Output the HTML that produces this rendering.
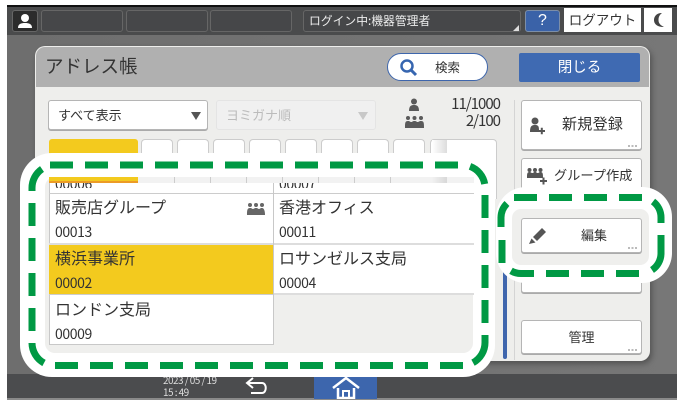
<!DOCTYPE html>
<html lang="ja"><head><meta charset="utf-8">
<style>
html,body{margin:0;padding:0;background:#fff}
#s{position:relative;width:684px;height:404px;overflow:hidden;background:#fff;font-family:"Liberation Sans","Noto Sans CJK JP",sans-serif;color:#333}
#s div{position:absolute;box-sizing:border-box;white-space:nowrap}
.j{font-family:"Noto Sans CJK JP",sans-serif}
.b{background:#fff;border:1px solid #b5b5b5;border-radius:3px;box-shadow:0 1px 0 #aaa}
.t{background:#fff;border:1px solid #ccc;border-bottom:0;border-radius:4px 4px 0 0;top:139px;height:20px}
.top{top:10px;height:22px;border:1px solid #666;border-radius:3px;background:#464749}
.n{font-size:16px;line-height:20px;color:#333;font-family:"Noto Sans CJK JP",sans-serif}
.c{font-size:14px;line-height:18px;color:#333;font-family:"Noto Sans CJK JP",sans-serif;letter-spacing:-.4px}
.d{position:absolute}
</style></head><body>
<div id="s">
<div style="left:7px;top:5px;width:670px;height:394px;background:linear-gradient(90deg,#6e6e6e,#777)"></div>
<div style="left:7px;top:5px;width:670px;height:2px;background:#111"></div>
<div style="left:7px;top:7px;width:670px;height:28px;background:#4a4b4c"></div>
<div class="top" style="left:12px;width:26px;background:#2c2c2c"></div>
<svg style="position:absolute;left:12px;top:10px" width="26" height="22"><circle cx="13" cy="8" r="4" fill="#fff"/><path d="M6 18c0-4 3-5 7-5s7 1 7 5z" fill="#fff"/></svg>
<div class="top" style="left:41px;width:82px"></div>
<div class="top" style="left:126px;width:82px"></div>
<div class="top" style="left:210px;width:82px"></div>
<div class="top j" style="left:303px;width:218px;color:#eee;font-size:11.800px;line-height:20px;padding-left:5px">ログイン中:機器管理者</div>
<svg style="position:absolute;left:512px;top:24px" width="8" height="8"><path d="M1 7L7 1V7z" fill="#ddd"/></svg>
<div style="left:525px;top:10px;width:35px;height:22px;background:#3a62a8;border:1px solid #7c8ea8;border-radius:3px;color:#fff;font-size:16px;line-height:20px;text-align:center">?</div>
<div class="j" style="left:564px;top:8px;width:77px;height:24px;background:#fff;color:#333;font-size:13.500px;line-height:23px;text-align:center">ログアウト</div>
<div style="left:644px;top:8px;width:28px;height:24px;background:#fff"></div>
<svg style="position:absolute;left:644px;top:8px" width="28" height="24"><path d="M18 5C12 5 10 9 10 12C10 15 12 19 20 19C16 17 14.500 15 14.500 12C14.500 9 15.500 7 18 5z" fill="#444"/></svg>

<div style="left:35px;top:46px;width:615px;height:315px;background:#eeeeec;border-radius:10px;box-shadow:2px 3px 6px rgba(0,0,0,.3)"></div>
<div style="left:36px;top:47px;width:613px;height:40px;background:#b0b0b0;border-radius:9px 9px 0 0"></div>
<div class="j" style="left:45px;top:53px;font-size:18.500px;line-height:26px;color:#333">アドレス帳</div>
<div style="left:387px;top:53px;width:101px;height:28px;background:#fff;border:1.500px solid #3e66ac;border-radius:14px"></div>
<svg style="position:absolute;left:397px;top:57px" width="24" height="22"><circle cx="10" cy="9" r="5.500" fill="none" stroke="#3766b0" stroke-width="2.500"/><path d="M14 13l5 5" stroke="#3766b0" stroke-width="3"/></svg>
<div class="j" style="left:435px;top:58px;font-size:12.500px;line-height:17px;color:#333">検索</div>
<div class="j" style="left:519px;top:53px;width:121px;height:29px;background:#3f6ab2;border-radius:2px;color:#fff;font-size:14.500px;line-height:27px;text-align:center">閉じる</div>

<div class="b j" style="left:48px;top:100px;width:160px;height:30px;font-size:13px;line-height:28px;padding-left:9px;color:#333">すべて表示</div>
<svg style="position:absolute;left:190px;top:111px" width="12" height="10"><path d="M1 1H11L6 9z" fill="#555"/></svg>
<div class="j" style="left:216px;top:100px;width:160px;height:30px;border:1px solid #e4e4e4;border-radius:3px;background:#f0f0f0;font-size:13px;line-height:28px;padding-left:9px;color:#bbb">ヨミガナ順</div>
<svg style="position:absolute;left:357px;top:111px" width="12" height="10"><path d="M1 1H11L6 9z" fill="#c8c8c8"/></svg>

<svg style="position:absolute;left:402px;top:97px" width="24" height="36" fill="#5a5a5a"><circle cx="12" cy="4.500" r="3"/><path d="M7 14c0-5 2-6 5-6s5 1 5 6z"/><circle cx="6" cy="21" r="2"/><circle cx="12.500" cy="21" r="2"/><circle cx="19" cy="21" r="2"/><path d="M3 31c0-5 0-7 3-7 2 0 2 1 3.200 1s1.300-1 3.300-1 2 1 3.200 1 1.300-1 3.300-1c3 0 3 2 3 7z"/></svg>
<div class="j" style="left:440px;top:95px;width:60px;text-align:right;font-size:15px;line-height:17px;letter-spacing:-1px;color:#333">11/1000<br>2/100</div>
<div style="left:514px;top:100px;width:1px;height:260px;background:#d4d4d4"></div>

<div style="left:49px;top:139px;width:89px;height:20px;background:#f3ca1e;border-radius:3px 3px 0 0"></div>
<div class="t" style="left:141px;width:32px"></div>
<div class="t" style="left:177px;width:32px"></div>
<div class="t" style="left:213px;width:32px"></div>
<div class="t" style="left:249px;width:32px"></div>
<div class="t" style="left:285px;width:32px"></div>
<div class="t" style="left:321px;width:32px"></div>
<div class="t" style="left:357px;width:32px"></div>
<div class="t" style="left:393px;width:32px"></div>
<div class="t" style="left:430px;width:67px;height:60px"></div>
<div style="left:432px;top:140px;width:15px;height:20px;background:linear-gradient(90deg,#fff,#ddd)"></div>

<div class="b" style="left:521px;top:100px;width:121px;height:50px"></div>
<svg style="position:absolute;left:528px;top:115px" width="20" height="20" fill="#555"><circle cx="7" cy="6" r="3.500"/><path d="M2 17c0-5 1-7 5-7s4 2 4 7z"/><path d="M10.500 15h6.500v2h-6.500zM12.800 12.700h2v6.500h-2z"/></svg>
<div class="j" style="left:562px;top:113px;font-size:15px;line-height:22px;letter-spacing:.3px">新規登録</div>
<svg class="d" style="left:628px;top:145px" width="10" height="2" fill="#bbb"><rect width="2" height="2"/><rect x="3.500" width="2" height="2"/><rect x="7" width="2" height="2"/></svg>
<div class="b" style="left:521px;top:158px;width:121px;height:40px"></div>
<svg style="position:absolute;left:525px;top:166px" width="24" height="20" fill="#555"><circle cx="4.500" cy="4" r="2"/><circle cx="10" cy="4" r="2"/><circle cx="15.500" cy="4" r="2"/><path d="M2 12c0-4 0-6 2.500-6 1.500 0 1.500 1 2.800 1s1.200-1 2.700-1 1.500 1 2.800 1 1.200-1 2.700-1c2.500 0 2.500 2 2.500 6z"/><path d="M15 14h7v2h-7zM17.500 11.500h2v7h-2z"/></svg>
<div class="j" style="left:554px;top:165px;font-size:13.200px;line-height:20px">グループ作成</div>

<div class="b" style="left:521px;top:255px;width:121px;height:38px"></div>
<div style="left:503px;top:270px;width:4px;height:89px;background:#3f66ad;border-radius:2px"></div>
<div class="b j" style="left:521px;top:320px;width:121px;height:34px;font-size:13px;line-height:32px;text-align:center;color:#333">管理</div>
<svg class="d" style="left:628px;top:349px" width="10" height="2" fill="#bbb"><rect width="2" height="2"/><rect x="3.500" width="2" height="2"/><rect x="7" width="2" height="2"/></svg>

<div style="left:7px;top:374px;width:670px;height:25px;background:#4b4c4e"></div>
<div style="left:7px;top:398px;width:670px;height:1.500px;background:#8a8a8a"></div>
<div style="left:314px;top:374px;width:63px;height:25px;background:#3d66ad"></div>
<div class="j" style="left:163px;top:374px;color:#ddd;font-size:10px;line-height:12px;letter-spacing:-.55px">2023 / 05 / 19<br>15 : 49</div>
<svg style="position:absolute;left:245px;top:377px" width="26" height="20" fill="none" stroke="#fff" stroke-width="2"><path d="M2 6H17c5 0 5 10 0 10H6"/><path d="M8 1L2 6l6 5"/></svg>
<svg style="position:absolute;left:332px;top:377px" width="28" height="22" fill="none" stroke="#fff"><path d="M1 11L14 1l13 10" stroke-width="2.500"/><path d="M6 11V21H22V11" stroke-width="2.500"/><path d="M11 21V14H17V21" stroke-width="2"/></svg>

<svg style="position:absolute;left:0;top:0" width="684" height="404">
<rect x="20" y="153" width="475" height="224" rx="32" fill="#fff"/>
<rect x="496" y="187" width="176" height="96" rx="30" fill="#fff"/>
<rect x="45" y="177" width="428" height="176" rx="10" fill="#efefed"/>
<rect x="512" y="209" width="137" height="56" rx="9" fill="#efefed"/>
</svg>

<div style="left:49px;top:177px;width:425px;height:6px;background:#f2f2f2"></div>
<div style="left:49px;top:177px;width:89px;height:6px;background:#f3ca1e;border-bottom:2px solid #ec9b26"></div>
<div style="left:174px;top:177px;width:1px;height:6px;background:#ccc"></div>
<div style="left:210px;top:177px;width:1px;height:6px;background:#ccc"></div>
<div style="left:246px;top:177px;width:1px;height:6px;background:#ccc"></div>
<div style="left:282px;top:177px;width:1px;height:6px;background:#ccc"></div>
<div style="left:318px;top:177px;width:1px;height:6px;background:#ccc"></div>
<div style="left:354px;top:177px;width:1px;height:6px;background:#ccc"></div>
<div style="left:390px;top:177px;width:1px;height:6px;background:#ccc"></div>
<div style="left:432px;top:177px;width:15px;height:6px;background:linear-gradient(90deg,#f2f2f2,#d8d8d8)"></div>

<div style="left:49px;top:183px;width:225px;height:162px;background:#fff;border:1px solid #c8c8c8;border-top:0"></div>
<div style="left:274px;top:183px;width:200px;height:112px;background:#fff;border-bottom:2px solid #ddd"></div>
<div style="left:49px;top:193px;width:425px;height:1px;background:#ccc"></div>
<div style="left:49px;top:243px;width:425px;height:2px;background:#ddd"></div>
<div style="left:49px;top:245px;width:225px;height:49px;background:#f3ca1e"></div>
<div style="left:49px;top:294px;width:225px;height:1px;background:#ccc"></div>
<div style="left:273px;top:183px;width:1px;height:162px;background:#c8c8c8"></div>

<div class="c" style="left:55px;top:183px;height:5px;overflow:hidden"><span style="display:block;margin-top:-8px">00006</span></div>
<div class="c" style="left:279px;top:183px;height:5px;overflow:hidden"><span style="display:block;margin-top:-8px">00007</span></div>
<div class="n" style="left:55px;top:196px">販売店グループ</div>
<div class="c" style="left:55px;top:223px">00013</div>
<svg style="position:absolute;left:246px;top:202px" width="20" height="14" fill="#666"><circle cx="4" cy="3" r="2"/><circle cx="10" cy="3" r="2"/><circle cx="16" cy="3" r="2"/><path d="M1 13c0-4 0-7 3-7 2 0 2 1 3 1s1-1 3-1 2 1 3 1 1-1 3-1 3 3 3 7z"/></svg>
<div class="n" style="left:279px;top:196px">香港オフィス</div>
<div class="c" style="left:279px;top:223px">00011</div>
<div class="n" style="left:55px;top:247px">横浜事業所</div>
<div class="c" style="left:55px;top:274px">00002</div>
<div class="n" style="left:279px;top:247px">ロサンゼルス支局</div>
<div class="c" style="left:279px;top:274px">00004</div>
<div class="n" style="left:55px;top:298px">ロンドン支局</div>
<div class="c" style="left:55px;top:325px">00009</div>

<div class="b j" style="left:521px;top:218px;width:121px;height:35px;font-size:13px;line-height:31px;padding-left:59px;color:#333">編集</div>
<svg style="position:absolute;left:527px;top:226px" width="20" height="20" fill="#555"><path d="M6 11L15 2l4 4L10 15z"/><path d="M4.500 12.500L8.500 16.500 2 18z"/></svg>
<svg class="d" style="left:628px;top:247px" width="10" height="2" fill="#bbb"><rect width="2" height="2"/><rect x="3.500" width="2" height="2"/><rect x="7" width="2" height="2"/></svg>

<svg style="position:absolute;left:0;top:0" width="684" height="404" fill="none" stroke="#009944" stroke-width="7">
<!-- address list outline -->
<path stroke-dasharray="23 12" d="M50 165H458"/>
<path d="M470 166.400A23 23 0 0 1 484.700 184"/>
<path stroke-dasharray="23 12" d="M485 195V323"/>
<path d="M485 335V342.500A23 23 0 0 1 473 362.700"/>
<path stroke-dasharray="23 12" d="M463 365.500H54" stroke-dashoffset="0"/>
<path d="M44 363A23 23 0 0 1 32 343"/>
<path stroke-dasharray="23 12" d="M32 331V203"/>
<path d="M32 191V188A23 23 0 0 1 42 169"/>
<!-- edit button outline -->
<path stroke-dasharray="23 12" d="M514 197.500H643"/>
<path d="M653 201.500A20 20 0 0 1 661 217.500V223"/>
<path d="M661 235V253.500A20 20 0 0 1 652 270"/>
<path stroke-dasharray="23 12" d="M639 273.500H546"/>
<path d="M534 273.500H521A20 20 0 0 1 511 270.800"/>
<path d="M502 263V240"/>
<path d="M501 227V217.500A20 20 0 0 1 507 203.500"/>
</svg>
</div>
</body></html>
